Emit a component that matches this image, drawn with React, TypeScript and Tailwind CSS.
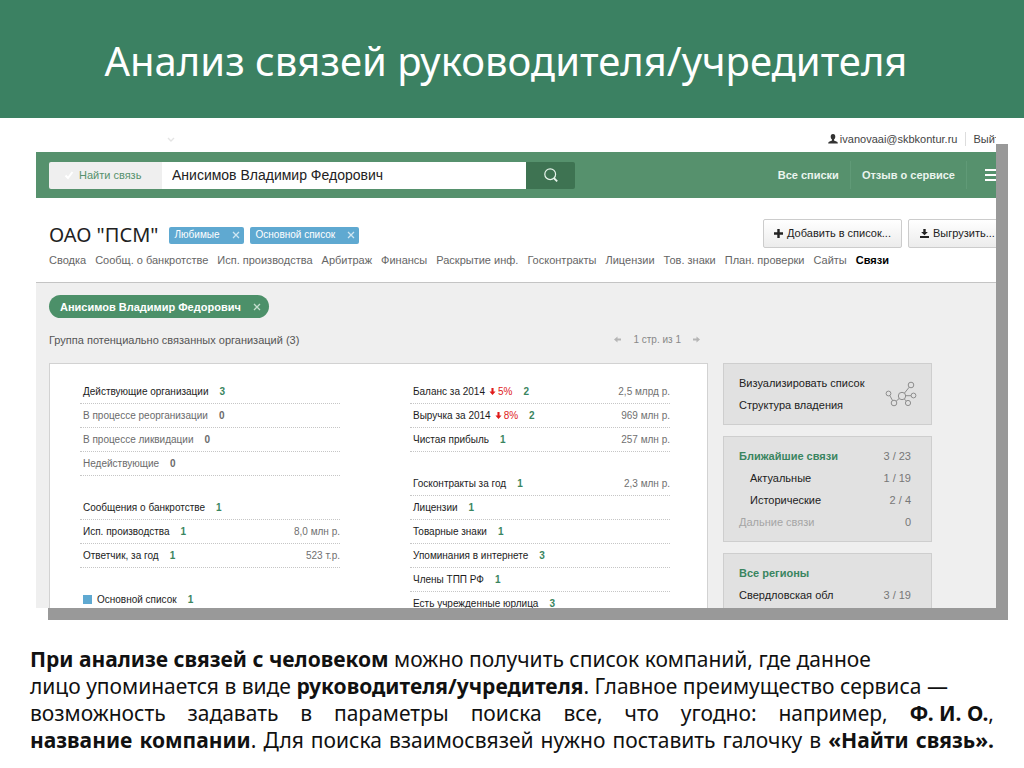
import type { ReactNode } from "react"

type Row = {
  label: string
  count: number
  drop?: string
  sum?: string
  muted?: boolean
  marker?: boolean
}

const tabs = [
  "Сводка",
  "Сообщ. о банкротстве",
  "Исп. производства",
  "Арбитраж",
  "Финансы",
  "Раскрытие инф.",
  "Госконтракты",
  "Лицензии",
  "Тов. знаки",
  "План. проверки",
  "Сайты",
  "Связи",
]

const leftGroups: Row[][] = [
  [
    { label: "Действующие организации", count: 3 },
    { label: "В процессе реорганизации", count: 0, muted: true },
    { label: "В процессе ликвидации", count: 0, muted: true },
    { label: "Недействующие", count: 0, muted: true },
  ],
  [
    { label: "Сообщения о банкротстве", count: 1 },
    { label: "Исп. производства", count: 1, sum: "8,0 млн р." },
    { label: "Ответчик, за год", count: 1, sum: "523 т.р." },
  ],
  [{ label: "Основной список", count: 1, marker: true }],
]

const rightGroups: Row[][] = [
  [
    { label: "Баланс за 2014", count: 2, drop: "5%", sum: "2,5 млрд р." },
    { label: "Выручка за 2014", count: 2, drop: "8%", sum: "969 млн р." },
    { label: "Чистая прибыль", count: 1, sum: "257 млн р." },
  ],
  [
    { label: "Госконтракты за год", count: 1, sum: "2,3 млн р." },
    { label: "Лицензии", count: 1 },
    { label: "Товарные знаки", count: 1 },
    { label: "Упоминания в интернете", count: 3 },
    { label: "Члены ТПП РФ", count: 1 },
    { label: "Есть учрежденные юрлица", count: 3 },
  ],
]

const Cross = () => (
  <svg viewBox="0 0 8 8" className="h-2 w-2" fill="none" stroke="currentColor">
    <path d="M1 1l6 6M7 1L1 7" strokeWidth="1.3" />
  </svg>
)

// points left, rotate it for the other directions
const Arrow = ({ className }: { className: string }) => (
  <svg viewBox="0 0 8 8" className={className} fill="currentColor">
    <path d="M0 4l4-3.5v2.3h4v2.4H4v2.3z" />
  </svg>
)

const Tag = ({ children }: { children: ReactNode }) => (
  <span className="flex h-[17px] items-center gap-3 rounded-xs bg-[#5fa9d1] pr-1 pl-[6px] text-[10px] text-white">
    {children}
    <button aria-label="Убрать" className="text-[#cfe6f2]">
      <Cross />
    </button>
  </span>
)

const StatColumn = ({ groups }: { groups: Row[][] }) => (
  <div className="flex min-w-0 flex-col gap-5 text-[10px]">
    {groups.map((rows, i) => (
      <ul key={i}>
        {rows.map((row) => (
          <li
            key={row.label}
            className="flex h-6 items-center border-b border-dotted border-[#c6c6c6] pl-[3px]"
          >
            {row.marker && <span className="mr-[5px] h-[9px] w-[9px] bg-[#5fa9d1]" />}
            <a href="#" className={row.muted ? "text-[#6b6b6b]" : "text-[#1c1c1c]"}>
              {row.label}
            </a>
            {row.drop && (
              <span className="ml-1 flex items-center gap-[2px] text-[#e01b1b]">
                <Arrow className="h-[7px] w-[7px] -rotate-90" />
                {row.drop}
              </span>
            )}
            <b className={row.muted ? "ml-[11px] text-[#6b6b6b]" : "ml-[11px] text-[#3a8560]"}>
              {row.count}
            </b>
            {row.sum && <span className="ml-auto text-[#707070]">{row.sum}</span>}
          </li>
        ))}
      </ul>
    ))}
  </div>
)

const SideRow = ({
  label,
  value,
  className,
}: {
  label: string
  value?: string
  className: string
}) => (
  <li className="flex h-[22px] items-center justify-between">
    <a href="#" className={className}>
      {label}
    </a>
    <span className="text-[#777777]">{value}</span>
  </li>
)

const NetworkIcon = () => (
  <svg viewBox="0 0 32 26" className="h-[26px] w-8" fill="none" stroke="#8d8d8d">
    <circle cx="17" cy="15" r="3.7" />
    <circle cx="26" cy="4" r="2.8" />
    <circle cx="28.5" cy="14.5" r="2.4" />
    <circle cx="23" cy="22" r="2.6" />
    <circle cx="9" cy="22" r="2.8" />
    <circle cx="3.5" cy="12.5" r="2.4" />
    <path d="M19.4 12.2l4.8-6M20.7 14.7h5.4M19.2 18l2.2 2M14.2 17.5l-3 2.6M4.8 14.6l2.8 5" />
  </svg>
)

const Screen = () => (
  <section className="mt-[14px] mr-7 ml-9 h-[476px] overflow-hidden bg-white font-['Liberation_Sans',Arial,sans-serif] text-[11px] leading-[14px] whitespace-nowrap text-[#333333] shadow-[12px_12px_0_#999999]">
    <div className="-mr-[10px] flex h-5 items-start pl-[131px]">
      <svg viewBox="0 0 8 5" className="mt-[5px] h-[5px] w-2" fill="none" stroke="#e4e4e4">
        <path d="M1 1l3 3 3-3" strokeWidth="1.4" />
      </svg>
      <div className="ml-auto flex items-center text-[#444444]">
        <svg viewBox="0 0 10 10" className="mr-[2px] h-[10px] w-[10px]" fill="#333333">
          <path d="M5 0C3.4 0 2.6 1.2 2.7 2.8c.1 1.3.6 2.2 1.3 2.8v.9L1 7.8C.4 8.1.2 8.8.2 9.6h9.6c0-.8-.2-1.5-.8-1.8L6 6.5v-.9c.7-.6 1.2-1.5 1.3-2.8C7.4 1.2 6.6 0 5 0z" />
        </svg>
        <a href="#" className="mr-2">ivanovaai@skbkontur.ru</a>
        <a href="#" className="border-l border-[#dddddd] pl-[7px]">Выйти</a>
      </div>
    </div>

    <div className="flex h-[46px] items-center bg-[#56916d] pl-[13px]">
      <form className="flex h-[27px]" onSubmit={(e) => e.preventDefault()}>
        <label className="flex w-[113px] items-center gap-[5px] rounded-l-xs bg-[#efefef] pl-[15px] text-[#56916d]">
          <span className="grid h-[10px] w-[10px]">
            <input
              type="checkbox"
              defaultChecked
              className="col-start-1 row-start-1 appearance-none"
            />
            <svg
              viewBox="0 0 10 10"
              className="col-start-1 row-start-1 h-[10px] w-[10px]"
              fill="none"
              stroke="#ffffff"
            >
              <path d="M1.5 5.5L4 8l4.5-6" strokeWidth="2" />
            </svg>
          </span>
          Найти связь
        </label>
        <input
          type="text"
          aria-label="Поиск"
          defaultValue="Анисимов Владимир Федорович"
          className="w-[364px] bg-white px-[10px] text-[14px] text-[#222222] outline-none"
        />
        <button
          aria-label="Найти"
          className="flex w-[49px] items-center justify-center rounded-r-xs bg-[#3e7352]"
        >
          <svg viewBox="0 0 14 14" className="h-[14px] w-[14px]" fill="none" stroke="#e8f5ec">
            <circle cx="6.2" cy="6.2" r="5.4" strokeWidth="1.2" />
            <path d="M9.8 10l3.4 3.4" strokeWidth="1.8" />
          </svg>
        </button>
      </form>
      <nav className="ml-auto flex h-7 items-center font-bold text-[#eaf4ed]">
        <a href="#" className="pr-[11px]">Все списки</a>
        <a href="#" className="flex h-7 items-center border-x border-[#609a77] px-[11px]">
          Отзыв о сервисе
        </a>
        <button aria-label="Меню" className="ml-[18px] flex flex-col gap-[3px]">
          <span className="h-[2px] w-[11px] bg-white" />
          <span className="h-[2px] w-[11px] bg-white" />
          <span className="h-[2px] w-[11px] bg-white" />
        </button>
      </nav>
    </div>

    <div className="h-[84px] pt-5 pl-[13px]">
      <div className="-mr-4 flex h-[30px] items-center">
        <div className="flex items-center gap-[6px] pt-1">
          <h2 className="mr-1 font-['Noto_Sans',sans-serif] text-[20px] leading-[30px] text-[#222222]">
            ОАО "ПСМ"
          </h2>
          <Tag>Любимые</Tag>
          <Tag>Основной список</Tag>
        </div>
        <div className="ml-auto flex gap-[6px] text-[#222222]">
          <button className="flex h-[29px] w-[139px] items-center justify-center gap-1 rounded-xs border border-[#cccccc] bg-linear-to-b from-white to-[#ececec]">
            <svg viewBox="0 0 9 9" className="h-[9px] w-[9px]" stroke="currentColor">
              <path d="M4.5 0v9M0 4.5h9" strokeWidth="2.4" />
            </svg>
            Добавить в список...
          </button>
          <button className="flex h-[29px] w-[104px] items-center gap-1 rounded-xs border border-[#cccccc] bg-linear-to-b from-white to-[#ececec] pl-[11px]">
            <svg viewBox="0 0 9 9" className="h-[9px] w-[9px]" fill="currentColor">
              <path d="M3.3 0h2.4v3h2.2L4.5 6.3 1.1 3h2.2zM0 7h9v2H0z" />
            </svg>
            Выгрузить...
          </button>
        </div>
      </div>
      <nav className="mt-[5px] flex gap-[9px] text-[#666666]">
        {tabs.map((tab) => (
          <a key={tab} href="#" className={tab === "Связи" ? "font-bold text-black" : ""}>
            {tab}
          </a>
        ))}
      </nav>
    </div>

    <div className="border-t border-[#c4c4c4] bg-[#efefef] pt-3 pr-16 pl-[13px]">
      <div className="flex h-[23px] w-fit items-center gap-3 rounded-full bg-[#4c9069] pr-2 pl-[11px] font-bold text-white">
        Анисимов Владимир Федорович
        <button aria-label="Убрать" className="text-[#c5dfcf]">
          <Cross />
        </button>
      </div>
      <div className="flex gap-[15px]">
        <main className="min-w-0 flex-1">
          <div className="flex h-[45px] items-center justify-between pr-2 pb-[2px] text-[#555555]">
            <h3>Группа потенциально связанных организаций (3)</h3>
            <div className="flex items-center gap-3 text-[10px] text-[#888888]">
              <button aria-label="Назад">
                <Arrow className="h-[7px] w-[7px] text-[#b5b5b5]" />
              </button>
              1 стр. из 1
              <button aria-label="Вперед">
                <Arrow className="h-[7px] w-[7px] rotate-180 text-[#b5b5b5]" />
              </button>
            </div>
          </div>
          <div className="grid grid-cols-2 gap-[70px] border border-[#d2d2d2] bg-white pt-4 pr-[37px] pb-6 pl-[30px]">
            <StatColumn groups={leftGroups} />
            <StatColumn groups={rightGroups} />
          </div>
        </main>
        <aside className="mt-[45px] flex w-[209px] flex-col gap-[11px]">
          <div className="flex items-center justify-between border border-[#cecece] bg-[#e1e1e1] py-2 pr-[14px] pl-[15px]">
            <ul>
              <SideRow label="Визуализировать список" className="text-[#222222]" />
              <SideRow label="Структура владения" className="text-[#222222]" />
            </ul>
            <NetworkIcon />
          </div>
          <ul className="border border-[#cecece] bg-[#e1e1e1] py-2 pr-5 pl-[15px]">
            <SideRow label="Ближайшие связи" value="3 / 23" className="font-bold text-[#3a8560]" />
            <SideRow label="Актуальные" value="1 / 19" className="pl-[11px] text-[#222222]" />
            <SideRow label="Исторические" value="2 / 4" className="pl-[11px] text-[#222222]" />
            <SideRow label="Дальние связи" value="0" className="text-[#a5a5a5]" />
          </ul>
          <ul className="border border-[#cecece] bg-[#e1e1e1] py-2 pr-5 pl-[15px]">
            <SideRow label="Все регионы" className="font-bold text-[#3a8560]" />
            <SideRow label="Свердловская обл" value="3 / 19" className="text-[#222222]" />
          </ul>
        </aside>
      </div>
    </div>
  </section>
)

export default function App() {
  return (
    <div className="min-h-screen overflow-hidden bg-white font-['Noto_Sans','Open_Sans',sans-serif]">
      <header className="flex h-[118px] items-center justify-center bg-[#3b8162] pt-1 pr-3">
        <h1 className="text-[40px] leading-[54px] whitespace-nowrap text-white">
          Анализ связей руководителя/учредителя
        </h1>
      </header>

      <Screen />

      <p className="mt-[38px] px-[30px] text-[21px] leading-[27px] text-[#111111]">
        <span className="block">
          <b>При анализе связей с человеком</b> можно получить список компаний, где данное
        </span>
        <span className="block">
          лицо упоминается в виде <b>руководителя/учредителя</b>. Главное преимущество сервиса —
        </span>
        <span className="block [text-align-last:justify]">
          возможность задавать в параметры поиска все, что угодно: например,{" "}
          <span className="whitespace-nowrap">
            <b className="inline-block [text-align-last:left]">Ф. И. О.</b>,
          </span>
        </span>
        <span className="block [text-align-last:justify]">
          <b>название компании</b>. Для поиска взаимосвязей нужно поставить галочку в{" "}
          <b>«Найти связь».</b>
        </span>
      </p>
    </div>
  )
}
